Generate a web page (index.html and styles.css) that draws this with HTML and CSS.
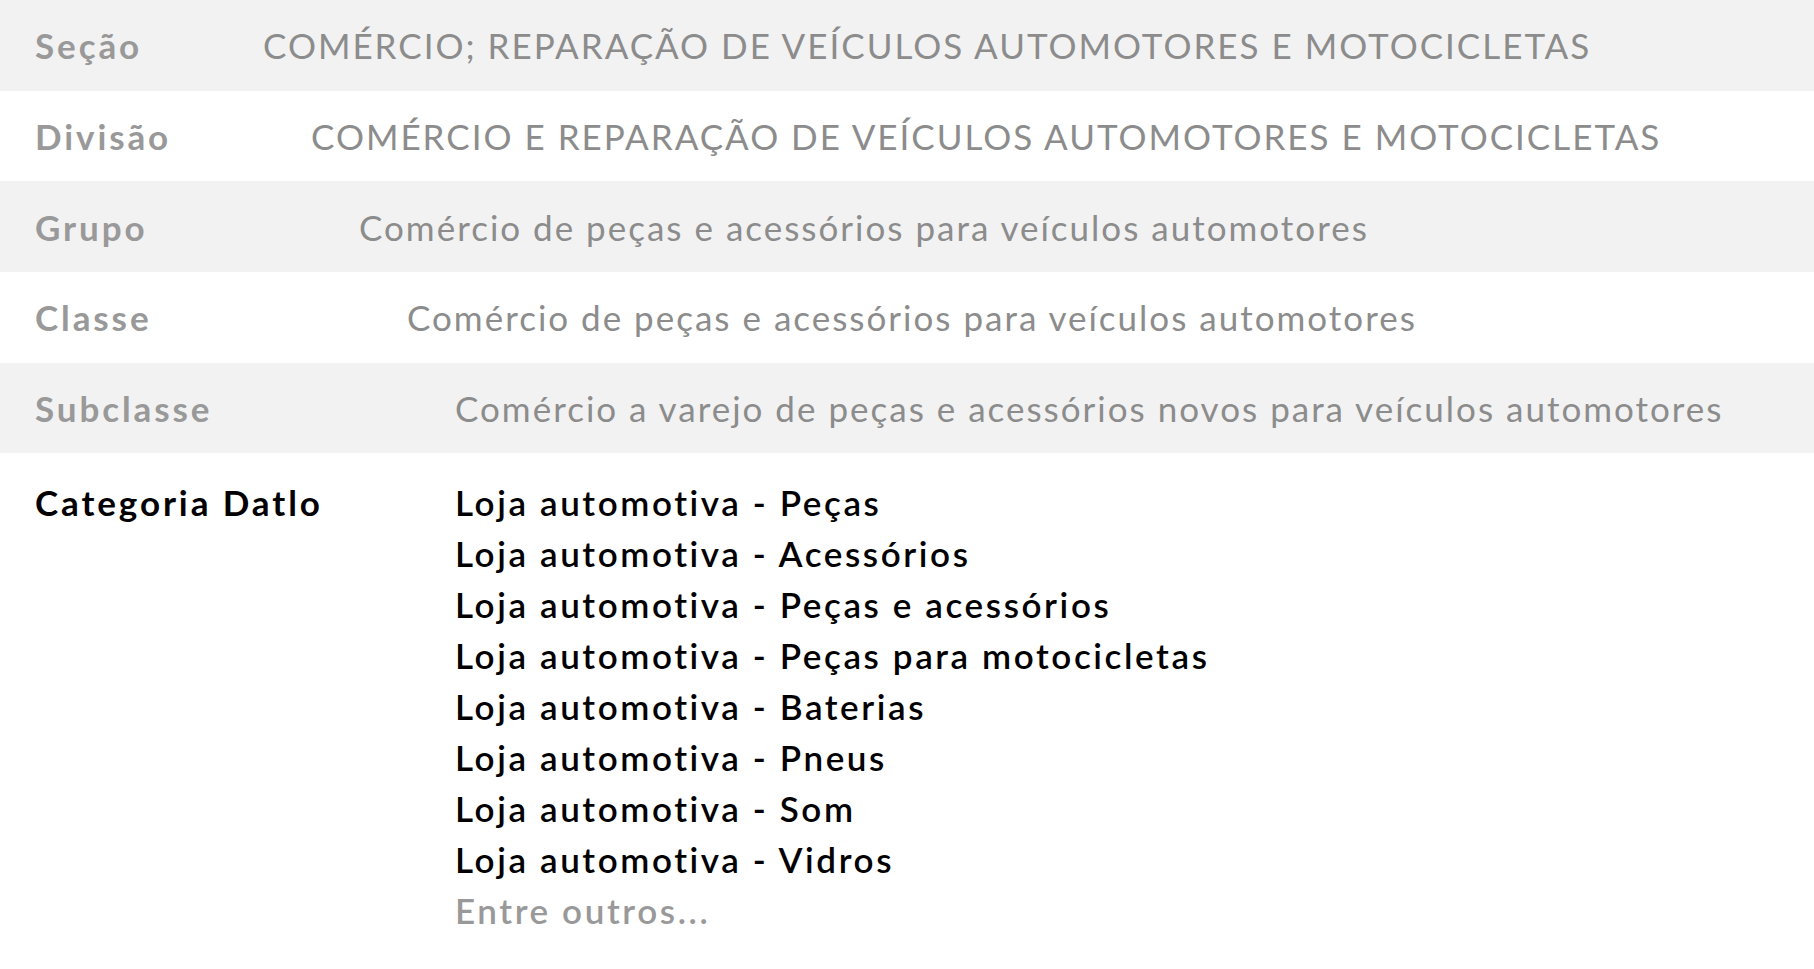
FILE: index.html
```html
<!DOCTYPE html>
<html lang="pt-BR">
<head>
    <meta charset="UTF-8">
    <title>Classificação CNAE</title>
    <link rel="stylesheet" href="styles.css">
</head>
<body>

    <!-- Hierarquia CNAE -->
    <div class="row shade">
        <div class="label">Seção</div>
        <div class="value level-0">COMÉRCIO; REPARAÇÃO DE VEÍCULOS AUTOMOTORES E MOTOCICLETAS</div>
    </div>
    <div class="row">
        <div class="label">Divisão</div>
        <div class="value level-1">COMÉRCIO E REPARAÇÃO DE VEÍCULOS AUTOMOTORES E MOTOCICLETAS</div>
    </div>
    <div class="row shade">
        <div class="label">Grupo</div>
        <div class="value level-2">Comércio de peças e acessórios para veículos automotores</div>
    </div>
    <div class="row">
        <div class="label">Classe</div>
        <div class="value level-3">Comércio de peças e acessórios para veículos automotores</div>
    </div>
    <div class="row shade">
        <div class="label">Subclasse</div>
        <div class="value level-4">Comércio a varejo de peças e acessórios novos para veículos automotores</div>
    </div>

    <!-- Categorias -->
    <div class="category">
        <div class="label dark">Categoria Datlo</div>
        <ul class="category-list level-4">
            <li>Loja automotiva - Peças</li>
            <li>Loja automotiva - Acessórios</li>
            <li>Loja automotiva - Peças e acessórios</li>
            <li>Loja automotiva - Peças para motocicletas</li>
            <li>Loja automotiva - Baterias</li>
            <li>Loja automotiva - Pneus</li>
            <li>Loja automotiva - Som</li>
            <li>Loja automotiva - Vidros</li>
            <li class="more">Entre outros...</li>
        </ul>
    </div>

</body>
</html>
```

FILE: styles.css
```css
body {
    margin: 0;
    font-family: Lato, "Open Sans", sans-serif;
    font-size: 35px;
    background: white;
    color: #8c8c8c;
}

/* Linhas da hierarquia */
.row {
    display: flex;
    align-items: center;
    height: 90.7px;
}

.shade {
    background-color: #f2f2f2;
}

.label {
    width: 263px;
    flex-shrink: 0;
    box-sizing: border-box;
    padding-left: 35px;
    font-weight: bold;
    letter-spacing: 2.9px;
    white-space: nowrap;
    color: #999;
}

.label.dark {
    color: #000;
}

.value {
    white-space: nowrap;
    letter-spacing: 2px;
}

/* Recuo crescente por nível */
.level-0 { margin-left: 0; }
.level-1 { margin-left: 48px; }
.level-2 { margin-left: 96px; }
.level-3 { margin-left: 144px; }
.level-4 { margin-left: 192px; }

/* Bloco de categorias */
.category {
    display: flex;
    align-items: flex-start;
    padding-top: 24px;
    line-height: 51px;
}

.category-list {
    list-style: none;
    margin-top: 0;
    margin-bottom: 0;
    padding: 0;
    color: #000;
    font-weight: 600;
    letter-spacing: 2.6px;
    white-space: nowrap;
}

.category-list .more {
    color: #999;
}
```
